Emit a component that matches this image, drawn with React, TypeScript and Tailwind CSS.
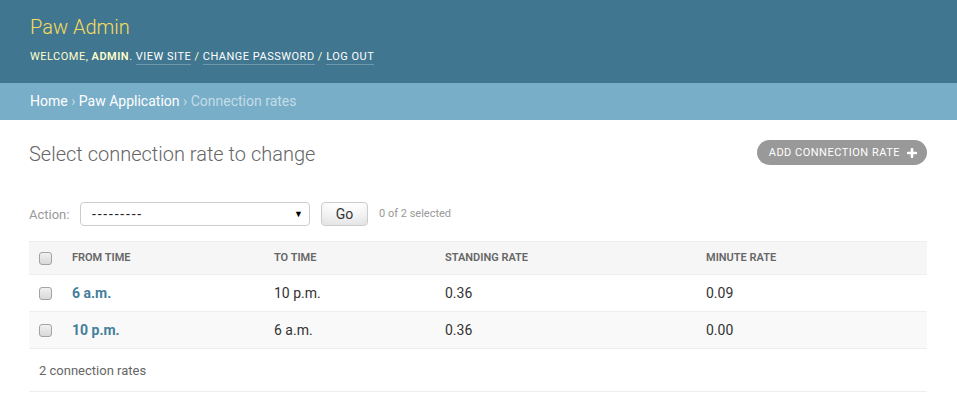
import React from "react";

function Checkbox() {
  return (
    <span className="block h-[13px] w-[13px] rounded-[3px] border border-[#a3a3a3] bg-gradient-to-b from-[#f0f0f0] to-[#d9d9d9]" />
  );
}

function PlusIcon() {
  return (
    <svg width="10" height="10" viewBox="0 0 10 10" className="shrink-0">
      <path d="M5 1v8M1 5h8" stroke="#fff" strokeWidth="2.6" strokeLinecap="round" />
    </svg>
  );
}

const rows = [
  { from: "6 a.m.", to: "10 p.m.", standing: "0.36", minute: "0.09" },
  { from: "10 p.m.", to: "6 a.m.", standing: "0.36", minute: "0.00" },
];

export default function App() {
  return (
    <div className="min-h-[404px] bg-white text-[#333] font-['Roboto','Liberation_Sans',sans-serif]">
      <header className="bg-[#417690] px-[30px] pt-[15px] pb-[16px] text-[#ffc]">
        <h1 className="mb-[8px] text-[20px] leading-[1.2] font-light text-[#f5dd5d]">Paw Admin</h1>
        <div className="text-[11px] uppercase leading-[1.85] tracking-[0.5px]">
          Welcome, <strong className="font-semibold">admin</strong>.{" "}
          <a className="inline-block border-b border-white/25 leading-[1.4] text-white">View site</a> /{" "}
          <a className="inline-block border-b border-white/25 leading-[1.4] text-white">Change password</a> /{" "}
          <a className="inline-block border-b border-white/25 leading-[1.4] text-white">Log out</a>
        </div>
      </header>
      <div className="bg-[#79aec8] px-[30px] py-[10px] text-[14px] leading-[17px] text-[#c4dce8]">
        <a className="text-white">Home</a> › <a className="text-white">Paw Application</a> › Connection rates
      </div>
      <main className="pl-[29px] pr-[30px] pt-[20px]">
        <div className="flex items-start justify-between">
          <h1 className="mt-[2px] text-[20px] leading-[24px] font-light text-[#666]">Select connection rate to change</h1>
          <a className="flex h-[25px] items-center rounded-[15px] bg-[#999] pl-[12px] pr-[10px] text-[11px] uppercase tracking-[0.5px] text-white">
            <span>Add connection rate</span>
            <span className="ml-[7px] flex"><PlusIcon /></span>
          </a>
        </div>
        <div className="mt-[36px] flex h-[24px] items-center text-[13px] text-[#999]">
          <span className="w-[41px]">Action:</span>
          <div className="ml-[10px] flex h-[24px] w-[230px] items-center justify-between rounded-[4px] border border-[#ccc] pl-[11px] pr-[6px] text-[14px] text-[#222]">
            <span className="tracking-[1.8px]">---------</span>
            <span className="text-[9px] text-black">▼</span>
          </div>
          <button className="ml-[11px] flex h-[24px] w-[47px] items-center justify-center rounded-[4px] border border-[#ccc] bg-white text-[14px] text-[#333] shadow-[inset_0_-15px_20px_-10px_rgba(0,0,0,0.15)]">
            Go
          </button>
          <span className="ml-[11px] text-[11px] text-[#999]">0 of 2 selected</span>
        </div>
        <div className="mt-[15px] w-full">
          <div className="flex h-[34px] items-center border-y border-[#eee] bg-[#f6f6f6] text-[11px] font-semibold uppercase text-[#666]">
            <div className="w-[33px] pl-[10px]"><Checkbox /></div>
            <div className="w-[202px] pl-[10px]">From time</div>
            <div className="w-[171px] pl-[10px]">To time</div>
            <div className="w-[261px] pl-[10px]">Standing rate</div>
            <div className="flex-1 pl-[10px]">Minute rate</div>
          </div>
          {rows.map((r, i) => (
            <div
              key={i}
              className={`flex h-[37px] items-center border-b border-[#eee] text-[14px] ${i === 1 ? "bg-[#f9f9f9]" : "bg-white"}`}
            >
              <div className="w-[33px] pl-[10px]"><Checkbox /></div>
              <div className="w-[202px] pl-[10px] font-bold text-[#447e9b]">{r.from}</div>
              <div className="w-[171px] pl-[10px]">{r.to}</div>
              <div className="w-[261px] pl-[10px]">{r.standing}</div>
              <div className="flex-1 pl-[10px]">{r.minute}</div>
            </div>
          ))}
          <div className="flex h-[43px] items-center border-b border-[#eee] px-[10px] text-[13px] text-[#666]">
            2 connection rates
          </div>
        </div>
      </main>
    </div>
  );
}
